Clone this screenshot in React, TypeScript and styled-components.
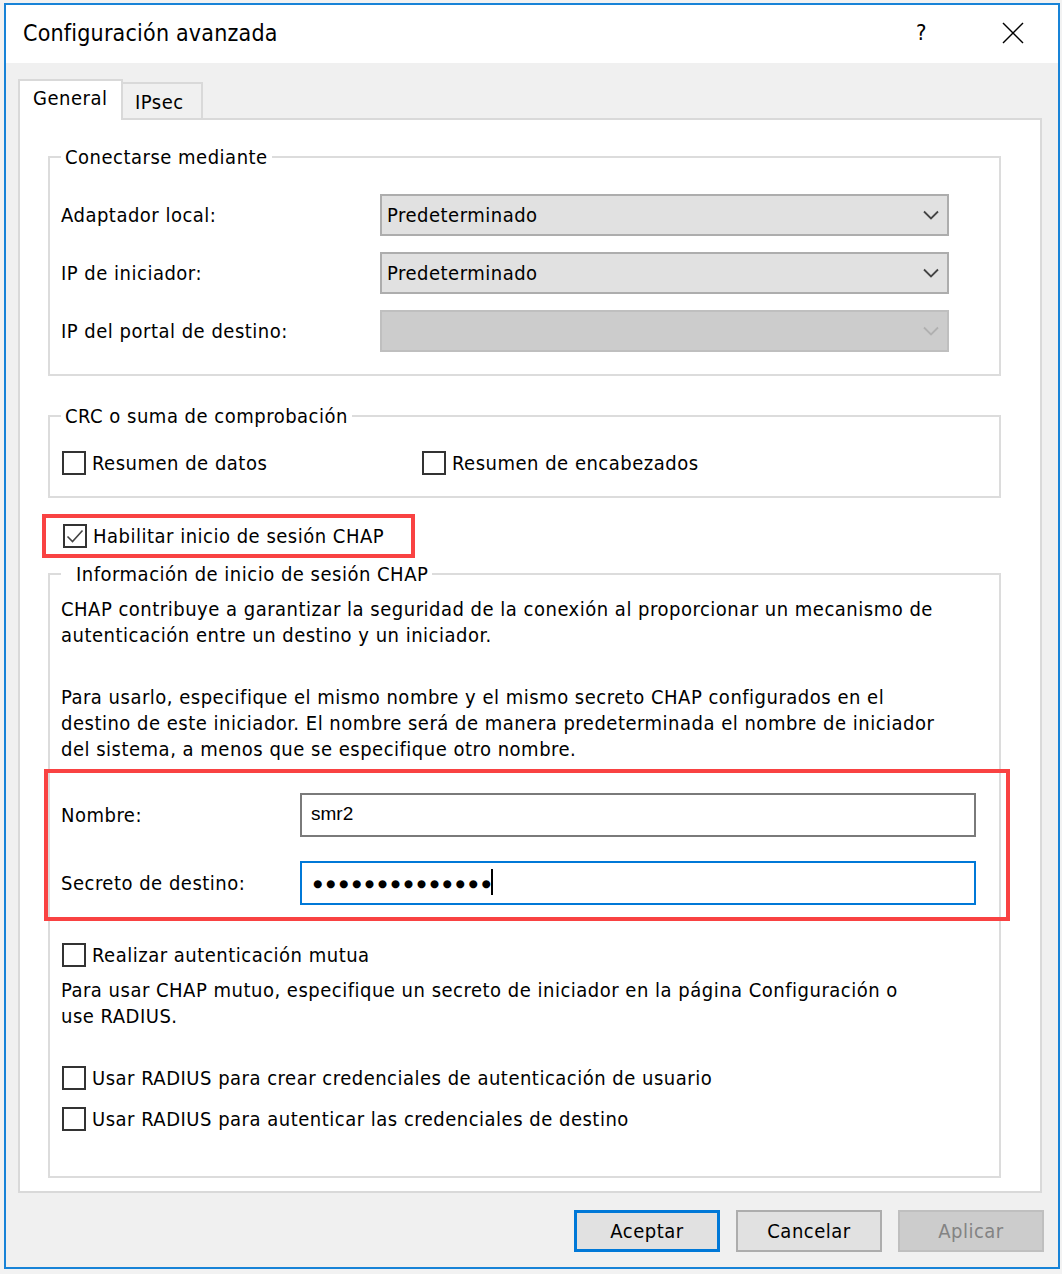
import * as React from "react";
import styled, { createGlobalStyle } from "styled-components";

const FONT = `"DejaVu Sans Condensed", "DejaVu Sans", sans-serif`;

const GlobalStyle = createGlobalStyle`
  html, body {
    margin: 0;
    padding: 0;
    background: #f2f2f2;
  }
  body {
    font-family: ${FONT};
    font-size: 20px;
    line-height: 26px;
    letter-spacing: 0.5px;
    color: #000;
  }
`;

const Window = styled.div`
  width: 1056px;
  height: 1266px;
  margin: 3px 0 0 4px;
  box-sizing: border-box;
  border: 2px solid #1883d7;
  background: #f0f0f0;
  display: flex;
  flex-direction: column;
`;

const TitleBar = styled.div`
  height: 58px;
  flex: none;
  background: #fff;
  display: flex;
  align-items: center;
  padding-left: 17px;
`;

const Title = styled.div`
  flex: 1;
  font-size: 23px;
  letter-spacing: 0.2px;
  padding-bottom: 2px;
`;

const TitleButton = styled.div`
  width: 91px;
  height: 100%;
  display: flex;
  align-items: center;
  justify-content: center;
  font-size: 22px;
  padding-bottom: 2px;
`;

const Client = styled.div`
  flex: 1;
  display: flex;
  flex-direction: column;
  padding: 16px 16px 15px 12px;
  min-height: 0;
`;

const TabStrip = styled.div`
  display: flex;
  align-items: flex-end;
  height: 41px;
  margin-bottom: -2px;
  position: relative;
  z-index: 1;
`;

const Tab = styled.div<{ active?: boolean }>`
  box-sizing: border-box;
  height: ${p => (p.active ? "41px" : "38px")};
  width: ${p => (p.active ? "105px" : "80px")};
  background: ${p => (p.active ? "#fff" : "#f0f0f0")};
  border: 2px solid #d9d9d9;
  border-bottom: ${p => (p.active ? "none" : "2px solid #d9d9d9")};
  border-left: ${p => (p.active ? "2px solid #d9d9d9" : "none")};
  padding-left: ${p => (p.active ? "13px" : "12px")};
  padding-top: ${p => (p.active ? "4px" : "5px")};
`;

const Panel = styled.div`
  flex: 1;
  background: #fff;
  border: 2px solid #d9d9d9;
  padding: 24px 39px 0 28px;
  display: flex;
  flex-direction: column;
  align-items: stretch;
`;

const Group = styled.fieldset<{ pt: number; pb: number; mt?: number }>`
  margin: ${p => p.mt || 0}px 0 0 0;
  border: 2px solid #dcdcdc;
  padding: ${p => p.pt}px 11px ${p => p.pb}px 11px;
  min-width: 0;
  display: flex;
  flex-direction: column;
`;

const Legend = styled.legend<{ indent?: number }>`
  padding: 0 4px 0 ${p => p.indent || 4}px;
  line-height: 26px;
`;

const FieldGrid = styled.div`
  display: grid;
  grid-template-columns: 319px 569px;
  row-gap: 16px;
  align-items: center;
`;

const Combo = styled.div<{ disabled?: boolean }>`
  box-sizing: border-box;
  height: 42px;
  border: 2px solid ${p => (p.disabled ? "#bfbfbf" : "#adadad")};
  background: ${p => (p.disabled ? "#cccccc" : "#e1e1e1")};
  display: flex;
  align-items: center;
  padding: 0 8px 0 5px;
  color: #000;
  span {
    flex: 1;
  }
  svg {
    stroke: ${p => (p.disabled ? "#b0b0b0" : "#444")};
  }
`;

const CheckRow = styled.div<{ mt?: number }>`
  display: flex;
  align-items: center;
  height: 26px;
  margin-top: ${p => p.mt || 0}px;
`;

const Box = styled.span`
  box-sizing: border-box;
  width: 24px;
  height: 24px;
  border: 2px solid #333;
  background: #fff;
  margin: 0 6px 0 1px;
  display: flex;
  align-items: center;
  justify-content: center;
  flex: none;
`;

const CheckPair = styled.div`
  display: grid;
  grid-template-columns: 360px 1fr;
`;

const Highlight = styled.div<{ w: number; pad: string; mt: number; ml: number }>`
  box-sizing: border-box;
  width: ${p => p.w}px;
  border: 4px solid #f94242;
  padding: ${p => p.pad};
  margin: ${p => p.mt}px 0 0 ${p => p.ml}px;
`;

const Para = styled.p<{ mt?: number }>`
  margin: ${p => p.mt || 0}px 0 0 0;
`;

const EditGrid = styled.div`
  display: grid;
  grid-template-columns: 239px 676px;
  row-gap: 24px;
  align-items: center;
`;

const Edit = styled.div<{ focused?: boolean }>`
  box-sizing: border-box;
  height: 44px;
  border: 2px solid ${p => (p.focused ? "#0078d7" : "#7a7a7a")};
  background: #fff;
  display: flex;
  align-items: center;
  padding-left: 9px;
  font-family: "Liberation Sans", Arial, sans-serif;
  font-size: 19px;
  letter-spacing: 0;
  padding-bottom: 3px;
`;

const Dots = styled.span`
  font-family: "DejaVu Sans", sans-serif;
  font-size: 10.5px;
  letter-spacing: 3.8px;
  margin-left: 2px;
  padding-top: 3px;
`;

const Caret = styled.span`
  width: 2px;
  height: 26px;
  background: #000;
  margin-left: -3px;
`;

const ButtonRow = styled.div`
  display: flex;
  justify-content: flex-end;
  gap: 16px;
  margin: 17px -2px 0 0;
`;

const Button = styled.div<{ kind?: "default" | "disabled" }>`
  box-sizing: border-box;
  width: 146px;
  height: 42px;
  display: flex;
  align-items: center;
  justify-content: center;
  background: ${p => (p.kind === "disabled" ? "#cccccc" : "#e1e1e1")};
  border: ${p =>
    p.kind === "default" ? "3px solid #0078d7" : p.kind === "disabled" ? "2px solid #bfbfbf" : "2px solid #adadad"};
  color: ${p => (p.kind === "disabled" ? "#838383" : "#000")};
`;

const Chevron = () => (
  <svg width="16" height="10" viewBox="0 0 16 10" fill="none" strokeWidth="1.8">
    <polyline points="1,1.5 8,8.5 15,1.5" />
  </svg>
);

const Check = () => (
  <svg width="20" height="20" viewBox="0 0 20 20" fill="none">
    <polyline points="2.5,10.5 7.5,15.5 17.5,4.5" stroke="#444" strokeWidth="1.6" />
  </svg>
);

const CheckBox = ({ checked, children, mt }: { checked?: boolean; children: React.ReactNode; mt?: number }) => (
  <CheckRow mt={mt}>
    <Box>{checked && <Check />}</Box>
    <span>{children}</span>
  </CheckRow>
);

export default function App() {
  return (
    <>
      <GlobalStyle />
      <Window>
        <TitleBar>
          <Title>Configuración avanzada</Title>
          <TitleButton>?</TitleButton>
          <TitleButton>
            <svg width="22" height="22" viewBox="0 0 22 22" stroke="#000" strokeWidth="1.5">
              <line x1="1" y1="1" x2="21" y2="21" />
              <line x1="21" y1="1" x2="1" y2="21" />
            </svg>
          </TitleButton>
        </TitleBar>
        <Client>
          <TabStrip>
            <Tab active>General</Tab>
            <Tab>IPsec</Tab>
          </TabStrip>
          <Panel>
            <Group pt={24} pb={22}>
              <Legend>Conectarse mediante</Legend>
              <FieldGrid>
                <span>Adaptador local:</span>
                <Combo>
                  <span>Predeterminado</span>
                  <Chevron />
                </Combo>
                <span>IP de iniciador:</span>
                <Combo>
                  <span>Predeterminado</span>
                  <Chevron />
                </Combo>
                <span>IP del portal de destino:</span>
                <Combo disabled>
                  <span />
                  <Chevron />
                </Combo>
              </FieldGrid>
            </Group>

            <Group pt={21} pb={20} mt={27}>
              <Legend>CRC o suma de comprobación</Legend>
              <CheckPair>
                <CheckBox>Resumen de datos</CheckBox>
                <CheckBox>Resumen de encabezados</CheckBox>
              </CheckPair>
            </Group>

            <Highlight w={373} pad="5px 0 5px 16px" mt={16} ml={-6}>
              <CheckBox checked>Habilitar inicio de sesión CHAP</CheckBox>
            </Highlight>

            <Group pt={9} pb={44} mt={3}>
              <Legend indent={15}>Información de inicio de sesión CHAP</Legend>
              <Para>
                CHAP contribuye a garantizar la seguridad de la conexión al proporcionar un mecanismo de
                <br />
                autenticación entre un destino y un iniciador.
              </Para>
              <Para mt={36}>
                Para usarlo, especifique el mismo nombre y el mismo secreto CHAP configurados en el
                <br />
                destino de este iniciador. El nombre será de manera predeterminada el nombre de iniciador
                <br />
                del sistema, a menos que se especifique otro nombre.
              </Para>

              <Highlight w={966} pad="20px 0 12px 13px" mt={7} ml={-17}>
                <EditGrid>
                  <span>Nombre:</span>
                  <Edit>smr2</Edit>
                  <span>Secreto de destino:</span>
                  <Edit focused>
                    <Dots>●●●●●●●●●●●●●●</Dots>
                    <Caret />
                  </Edit>
                </EditGrid>
              </Highlight>

              <CheckBox mt={21}>Realizar autenticación mutua</CheckBox>
              <Para mt={9}>
                Para usar CHAP mutuo, especifique un secreto de iniciador en la página Configuración o
                <br />
                use RADIUS.
              </Para>
              <CheckBox mt={36}>Usar RADIUS para crear credenciales de autenticación de usuario</CheckBox>
              <CheckBox mt={15}>Usar RADIUS para autenticar las credenciales de destino</CheckBox>
            </Group>
          </Panel>
          <ButtonRow>
            <Button kind="default">Aceptar</Button>
            <Button>Cancelar</Button>
            <Button kind="disabled">Aplicar</Button>
          </ButtonRow>
        </Client>
      </Window>
    </>
  );
}
